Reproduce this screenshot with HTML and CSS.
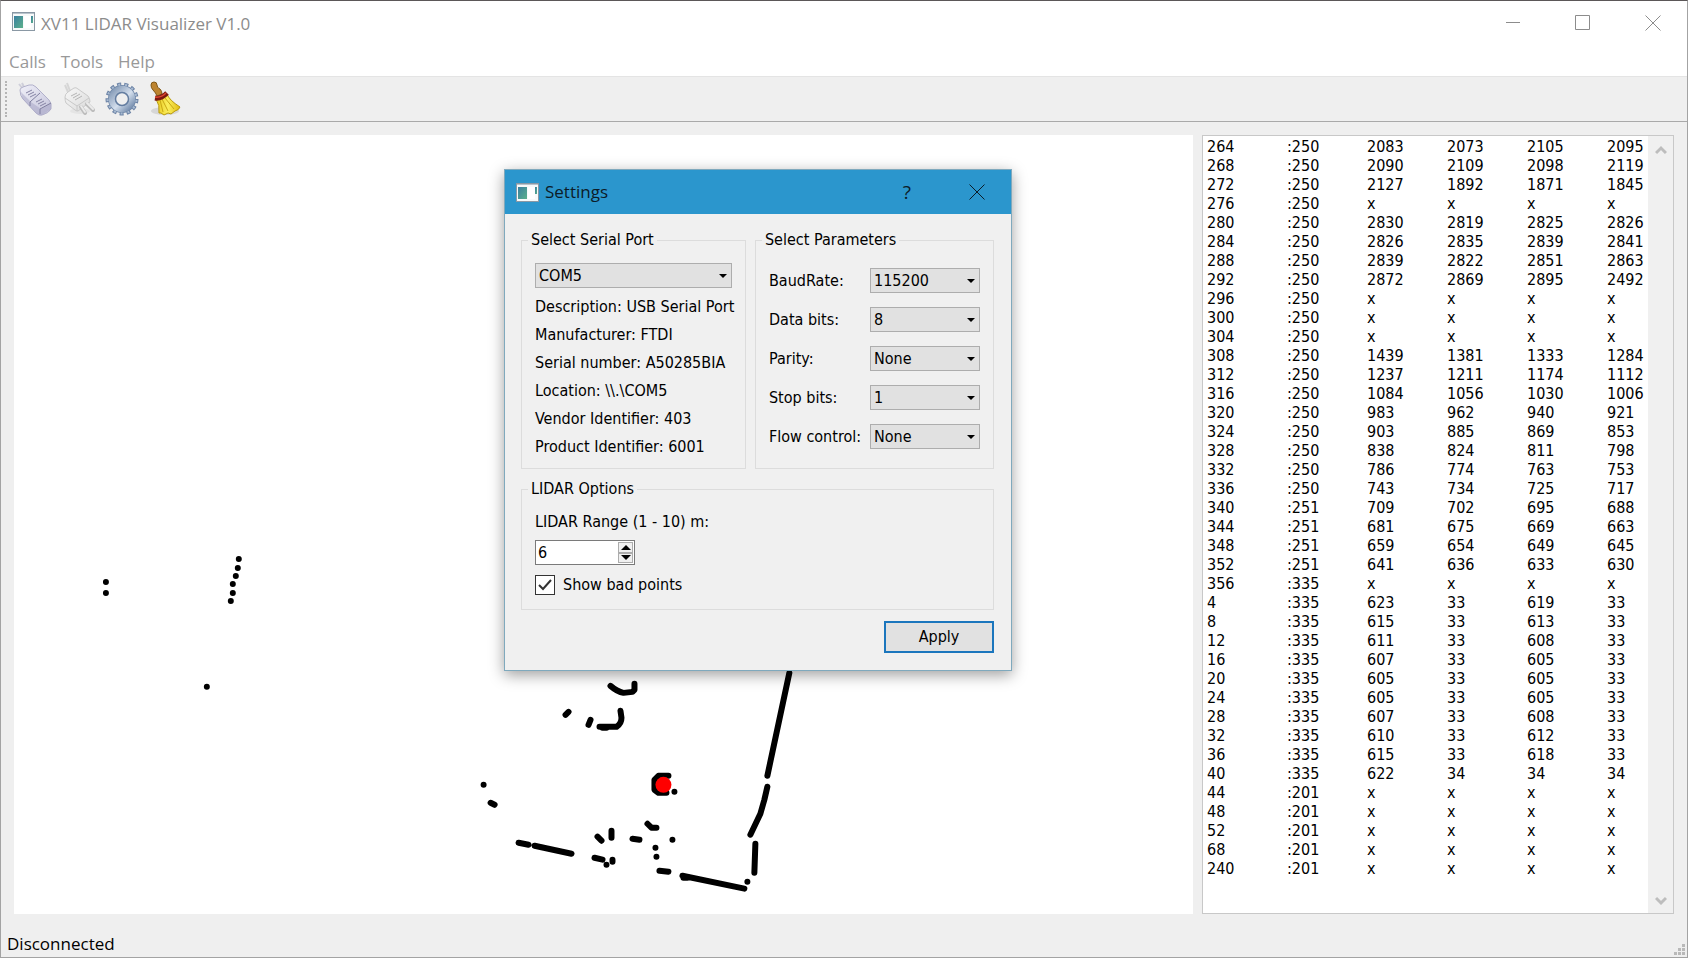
FILE: index.html
```html
<!DOCTYPE html>
<html lang="en">
<head>
<meta charset="utf-8">
<title>XV11 LIDAR Visualizer V1.0</title>
<link rel="stylesheet" href="styles.css">
</head>
<body>
<svg width="0" height="0" class="defs" aria-hidden="true">
  <defs>
    <linearGradient id="teal" x1="0" y1="0" x2="1" y2="1"><stop offset="0" stop-color="#3a7fa0"/><stop offset="1" stop-color="#5bb08a"/></linearGradient>
    <linearGradient id="steel" x1="0" y1="0" x2="1" y2="1"><stop offset="0" stop-color="#8298b5"/><stop offset=".55" stop-color="#d3deec"/><stop offset="1" stop-color="#6f88aa"/></linearGradient>
    <linearGradient id="lilac" x1="0" y1="0" x2="1" y2="1"><stop offset="0" stop-color="#f0f0f8"/><stop offset="1" stop-color="#c3c2da"/></linearGradient>
    <linearGradient id="pale" x1="0" y1="0" x2="1" y2="1"><stop offset="0" stop-color="#f8f8f8"/><stop offset="1" stop-color="#dadada"/></linearGradient>
    <linearGradient id="straw" x1="0" y1="0" x2="1" y2="0"><stop offset="0" stop-color="#e8c71c"/><stop offset=".5" stop-color="#fbee5c"/><stop offset="1" stop-color="#e2bd12"/></linearGradient>
    <symbol id="app" viewBox="0 0 23 19">
      <rect x=".5" y=".5" width="22" height="18" fill="#f8fafa" stroke="#8a98a4"/>
      <path d="M1 1.500H22" stroke="#b9c4cc"/>
      <rect x="2" y="4" width="9" height="12" fill="url(#teal)"/>
      <rect x="12" y="4" width="7" height="12" fill="#fff"/>
      <rect x="19" y="4" width="2" height="7" fill="url(#teal)"/>
    </symbol>
  </defs>
</svg>
<div class="window">
  <header class="titlebar">
    <svg class="appicon" width="23" height="19" aria-hidden="true"><use href="#app"/></svg>
    <h1 class="title">XV11 LIDAR Visualizer V1.0</h1>
    <div class="winbuttons">
      <button class="winbtn" aria-label="Minimize"><svg width="16" height="16"><path d="M1 7.500H15"/></svg></button>
      <button class="winbtn" aria-label="Maximize"><svg width="16" height="16"><path d="M.5.5H14.500V14.500H.5Z"/></svg></button>
      <button class="winbtn" aria-label="Close"><svg width="16" height="16"><path d="M.5.5 15.500 15.500M15.500.5.5 15.500"/></svg></button>
    </div>
  </header>
  <nav class="menubar">
    <button>Calls</button><button>Tools</button><button>Help</button>
  </nav>
  <div class="toolbar">
    <span class="grip"></span>
    <button class="tool" aria-label="Connect">
      <svg width="36" height="36" viewBox="0 0 36 36">
        <path d="M4 2 6 6M1 3 5 8" stroke="#cfcfda" stroke-width="2"/>
        <path d="M2 9Q2 7 5 6L11 4Q15 3 18 6L31 19Q34 22 33 28Q31 32 24 34Q21 35 18 32L5 18Q2 15 2 9Z" fill="url(#lilac)" stroke="#b1b0ca"/>
        <path d="M4 17 18 32Q21 35 24 34L33 28 33 22 23 28 13 21 3 11Z" fill="#a9a8c6" opacity=".55"/>
        <path d="M12 25V21L22 12M22 33V28L33 22" fill="none" stroke="#7f7e9f"/>
        <path d="M8 12 14 9M10 14 16 11M12 16 18 13M18 21 24 18M20 23 26 20M22 25 28 22" stroke="#8583a4"/>
      </svg>
    </button>
    <button class="tool" aria-label="Disconnect">
      <svg width="36" height="36" viewBox="0 0 36 36">
        <ellipse cx="19" cy="30" rx="10" ry="3" fill="#e4e4e4"/>
        <path d="M6 2 9 10M4 4 7 11" stroke="#d6d6d6" stroke-width="2"/>
        <path d="M4 16Q4 13 7 11L13 7Q15 6 17 8L27 15Q29 17 29 21L17 30Q15 30 14 29L5 22Q4 20 4 16Z" fill="url(#pale)" stroke="#cacaca"/>
        <path d="M4 17 16 25 28 17M16 25V30" fill="none" stroke="#c8c8c8"/>
        <path d="M10 15 16 12M12 17 19 13M14 19 21 15" stroke="#b5b5b5"/>
        <path d="M20 26 24 32M26 23 32 29" stroke="#bdbdbd" stroke-width="4" stroke-linecap="round"/>
        <path d="M20 25 24 31M26 22 32 28" stroke="#ebebeb" stroke-width="2" stroke-linecap="round"/>
      </svg>
    </button>
    <button class="tool" aria-label="Settings">
      <svg width="36" height="36" viewBox="0 0 36 36">
        <circle cx="18" cy="18" r="14.500" fill="none" stroke="#6d84a6" stroke-width="4" stroke-dasharray="4 3.010"/>
        <circle cx="18" cy="18" r="10" fill="none" stroke="#6f87a8" stroke-width="8"/>
        <circle cx="18" cy="18" r="14.500" fill="none" stroke="#a9bbd2" stroke-width="2" stroke-dasharray="2 5.010" stroke-dashoffset="-1"/>
        <circle cx="18" cy="18" r="10" fill="none" stroke="url(#steel)" stroke-width="6.500"/>
        <circle cx="18" cy="18" r="6.500" fill="#efefef" stroke="#647da0" stroke-width="1.500"/>
      </svg>
    </button>
    <button class="tool" aria-label="Clear">
      <svg width="36" height="36" viewBox="0 0 36 36">
        <ellipse cx="18" cy="30" rx="14" ry="4" fill="#d6d6d6"/>
        <path d="M4 4Q4 1 7 1Q10 1 10 4Q10 7 13 8Q15 10 15 13L10 15Q9 12 6 9Q4 7 4 4Z" fill="#bd8430" stroke="#805715"/>
        <path d="M9 18 20 13Q22 19 33 26Q32 29 28 30L24 33 21 32 17 34 14 32 12 32Q13 24 9 18Z" fill="url(#straw)" stroke="#b99a0b"/>
        <path d="M13 19 16 31M15 18 21 30M18 17 27 28" stroke="#c9a814" fill="none"/>
        <path d="M8 17Q14 18 20 12" fill="none" stroke="#7b1810" stroke-width="5"/>
        <path d="M8 16Q14 17 19 12" fill="none" stroke="#dc4630" stroke-width="1.500"/>
      </svg>
    </button>
  </div>
  <main class="workspace">
    <section class="plot" aria-label="Scan plot">
      <svg class="scan" viewBox="14 135 1180 779">
        <g class="pt">
          <path d="M106 582h0M106 593h0M239 559h0M238 568h0M236 576h0M233 584h0M233 593h0M231 601h0M207 687h0M484 785h0M491 803l4 2M519 843l10 2M535 846l37 8"/>
          <path d="M611 686Q618 692 624 693L633 692 635 690V684M566 715l3-3M589 725l2-5M600 727H617Q622 724 622 718L621 711M603 728h4M675 792h0"/>
          <path d="M790 673 768 776M768 787 765 800 761 814 751 835M756 844 755 873M748 882h0"/>
          <path d="M648 824l4 4h5M633 839l7 1M673 840h0M656 848h0M657 857h0M612 831v7M598 837l4 4M595 858l8 2M607 865h0M613 860v2M660 871l9 1M683 876 745 889M684 878h4"/>
          <path d="M669 776H659L655 780V790L659 793H667"/>
        </g>
        <circle cx="664" cy="785" r="8" fill="#f00"/>
      </svg>
    </section>
    <section class="log">
      <table class="readings">
        <colgroup><col class="c"><col class="c"><col class="c"><col class="c"><col class="c"><col></colgroup>
        <tbody>
        <tr><td>264<td>:250<td>2083<td>2073<td>2105<td>2095
        <tr><td>268<td>:250<td>2090<td>2109<td>2098<td>2119
        <tr><td>272<td>:250<td>2127<td>1892<td>1871<td>1845
        <tr><td>276<td>:250<td>x<td>x<td>x<td>x
        <tr><td>280<td>:250<td>2830<td>2819<td>2825<td>2826
        <tr><td>284<td>:250<td>2826<td>2835<td>2839<td>2841
        <tr><td>288<td>:250<td>2839<td>2822<td>2851<td>2863
        <tr><td>292<td>:250<td>2872<td>2869<td>2895<td>2492
        <tr><td>296<td>:250<td>x<td>x<td>x<td>x
        <tr><td>300<td>:250<td>x<td>x<td>x<td>x
        <tr><td>304<td>:250<td>x<td>x<td>x<td>x
        <tr><td>308<td>:250<td>1439<td>1381<td>1333<td>1284
        <tr><td>312<td>:250<td>1237<td>1211<td>1174<td>1112
        <tr><td>316<td>:250<td>1084<td>1056<td>1030<td>1006
        <tr><td>320<td>:250<td>983<td>962<td>940<td>921
        <tr><td>324<td>:250<td>903<td>885<td>869<td>853
        <tr><td>328<td>:250<td>838<td>824<td>811<td>798
        <tr><td>332<td>:250<td>786<td>774<td>763<td>753
        <tr><td>336<td>:250<td>743<td>734<td>725<td>717
        <tr><td>340<td>:251<td>709<td>702<td>695<td>688
        <tr><td>344<td>:251<td>681<td>675<td>669<td>663
        <tr><td>348<td>:251<td>659<td>654<td>649<td>645
        <tr><td>352<td>:251<td>641<td>636<td>633<td>630
        <tr><td>356<td>:335<td>x<td>x<td>x<td>x
        <tr><td>4<td>:335<td>623<td>33<td>619<td>33
        <tr><td>8<td>:335<td>615<td>33<td>613<td>33
        <tr><td>12<td>:335<td>611<td>33<td>608<td>33
        <tr><td>16<td>:335<td>607<td>33<td>605<td>33
        <tr><td>20<td>:335<td>605<td>33<td>605<td>33
        <tr><td>24<td>:335<td>605<td>33<td>605<td>33
        <tr><td>28<td>:335<td>607<td>33<td>608<td>33
        <tr><td>32<td>:335<td>610<td>33<td>612<td>33
        <tr><td>36<td>:335<td>615<td>33<td>618<td>33
        <tr><td>40<td>:335<td>622<td>34<td>34<td>34
        <tr><td>44<td>:201<td>x<td>x<td>x<td>x
        <tr><td>48<td>:201<td>x<td>x<td>x<td>x
        <tr><td>52<td>:201<td>x<td>x<td>x<td>x
        <tr><td>68<td>:201<td>x<td>x<td>x<td>x
        <tr><td>240<td>:201<td>x<td>x<td>x<td>x
        </tbody>
      </table>
      <div class="scrollbar">
        <button aria-label="Scroll up"><svg width="12" height="10"><path d="M1 8 6 3 11 8"/></svg></button>
        <button aria-label="Scroll down"><svg width="12" height="10"><path d="M1 2 6 7 11 2"/></svg></button>
      </div>
    </section>
  </main>
  <footer class="statusbar">
    <span>Disconnected</span>
    <svg class="sizegrip" width="11" height="11" aria-hidden="true"><path d="M8 0h3v3h-3zM4 4h3v3h-3zM8 4h3v3h-3zM0 8h3v3h-3zM4 8h3v3h-3zM8 8h3v3h-3z" fill="#b9b9b9"/></svg>
  </footer>

  <form class="dialog" role="dialog" aria-labelledby="dlg-title">
    <div class="dialog-bar">
      <svg width="23" height="19" aria-hidden="true"><use href="#app"/></svg>
      <h2 class="dialog-title" id="dlg-title">Settings</h2>
      <button type="button" class="dialog-help" aria-label="Help">?</button>
      <button type="button" class="dialog-close" aria-label="Close"><svg width="16" height="16"><path d="M.5.5 15.500 15.500M15.500.5.5 15.500"/></svg></button>
    </div>
    <div class="dialog-body">
      <div class="groups">
        <fieldset class="group port">
          <legend>Select Serial Port</legend>
          <div class="combo"><select aria-label="Serial port"><option>COM5</option></select></div>
          <div class="info">
            <p>Description: USB Serial Port</p>
            <p>Manufacturer: FTDI</p>
            <p>Serial number: A50285BIA</p>
            <p>Location: \\.\COM5</p>
            <p>Vendor Identifier: 403</p>
            <p>Product Identifier: 6001</p>
          </div>
        </fieldset>
        <fieldset class="group params">
          <legend>Select Parameters</legend>
          <div class="fields">
            <label for="baud">BaudRate:</label><div class="combo"><select id="baud"><option>115200</option></select></div>
            <label for="data">Data bits:</label><div class="combo"><select id="data"><option>8</option></select></div>
            <label for="parity">Parity:</label><div class="combo"><select id="parity"><option>None</option></select></div>
            <label for="stop">Stop bits:</label><div class="combo"><select id="stop"><option>1</option></select></div>
            <label for="flow">Flow control:</label><div class="combo"><select id="flow"><option>None</option></select></div>
          </div>
        </fieldset>
      </div>
      <fieldset class="group options">
        <legend>LIDAR Options</legend>
        <label for="range">LIDAR Range (1 - 10) m:</label>
        <div class="spin">
          <input id="range" type="number" min="1" max="10" value="6">
          <div class="steps">
            <button type="button" class="step" aria-label="Increase"><svg width="10" height="5"><path d="M0 5 5 0 10 5Z"/></svg></button>
            <button type="button" class="step" aria-label="Decrease"><svg width="10" height="5"><path d="M0 0 5 5 10 0Z"/></svg></button>
          </div>
        </div>
        <div class="check">
          <span class="box"><input id="bad" type="checkbox" checked><svg width="14" height="12" aria-hidden="true"><path d="M1 6 5 10 13 1"/></svg></span>
          <label for="bad">Show bad points</label>
        </div>
      </fieldset>
      <button type="button" class="apply">Apply</button>
    </div>
  </form>
</div>
</body>
</html>
```
FILE: styles.css
```css
* { box-sizing: border-box; }
body {
  margin: 0;
  font: 16px/20px "DejaVu Sans Condensed", "Noto Sans", sans-serif;
  color: #000;
}
button, input, select { font: inherit; color: inherit; margin: 0; padding: 0; }
button { background: none; border: 0; display: flex; align-items: center; justify-content: center; }
svg { display: block; }
.defs { position: absolute; }

.window {
  position: relative;
  min-height: 100vh;
  display: flex;
  flex-direction: column;
  background: #efefef;
  border: 1px solid #a3a3a3;
  border-top-color: #5b5758;
}

.titlebar {
  display: flex;
  align-items: flex-start;
  background: #fff;
  height: 44px;
  padding: 11px 14px 0 11px;
}
.title {
  margin: 0 0 0 6px;
  flex: 1;
  font: 400 17px/24px "Open Sans", sans-serif;
  color: #8c8c8c;
}
.winbuttons { display: flex; gap: 54px; padding: 3px 12px 0 0; }
.winbtn svg, .dialog-close svg { fill: none; stroke: #8c8c8c; }

.menubar {
  display: flex;
  gap: 15px;
  height: 32px;
  padding: 5px 8px;
  background: #fff;
  border-bottom: 1px solid #e4e4e4;
}
.menubar button { font: 17px/24px "Open Sans", sans-serif; color: #999; height: 24px; }

.toolbar {
  display: flex;
  align-items: center;
  gap: 7px;
  height: 45px;
  padding: 0 4px;
  border-bottom: 1px solid #a9a9a9;
}
.grip { align-self: stretch; margin: 4px 4px 4px 0; border-left: 2px dotted #b5b5b5; }
.tool { width: 36px; height: 40px; }

.workspace {
  flex: 1;
  display: flex;
  gap: 9px;
  padding: 13px 13px 0 13px;
}
.plot { flex: 1; min-width: 0; background: #fff; display: flex; }
.scan { width: 100%; }
.pt { fill: none; stroke: #000; stroke-width: 6; stroke-linecap: round; stroke-linejoin: round; }

.log { width: 472px; display: flex; background: #fff; border: 1px solid #c8c8c8; }
.readings { flex: 1; align-self: flex-start; table-layout: fixed; width: 0; border-collapse: collapse; margin: 1px 0 0 4px; }
.c { width: 80px; }
.readings td { padding: 0; height: 19px; line-height: 19px; }
.scrollbar {
  width: 25px;
  background: #f0f0f0;
  display: flex;
  flex-direction: column;
  justify-content: space-between;
  align-items: center;
  padding: 9px 0 7px;
}
.scrollbar path { fill: none; stroke: #bdbdbd; stroke-width: 3; }

.statusbar {
  display: flex;
  justify-content: space-between;
  align-items: flex-end;
  height: 43px;
  padding: 0 2px 1px 6px;
  font: 17px/24px "Open Sans", sans-serif;
}
.sizegrip { margin-bottom: 1px; }

.dialog {
  position: absolute;
  left: 503px;
  top: 168px;
  width: 508px;
  background: #f0f0f0;
  border: 1px solid #7fa9bd;
  box-shadow: 0 4px 14px rgba(0, 0, 0, .38);
}
.dialog-bar {
  display: flex;
  align-items: center;
  height: 44px;
  padding: 0 26px 0 11px;
  background: #2b96cd;
  color: #0c1c28;
}
.dialog-title { flex: 1; margin: 0 0 0 6px; font: 400 17px/24px "Open Sans", sans-serif; }
.dialog-help { font: 19px/24px "Open Sans", sans-serif; margin-right: 58px; }
.dialog-close svg { stroke: #0c1c28; }

.dialog-body { display: flex; flex-direction: column; padding: 16px 17px 17px 16px; }
.groups { display: flex; gap: 9px; }
.group { min-width: 0; margin: 0; border: 1px solid #dcdcdc; padding: 13px 13px 7px; }
.group legend { margin-left: -7px; padding: 0 3px; }
.port { flex: 224; }
.params { flex: 240; padding-top: 18px; }
.info { margin-top: 5px; }
.info p { margin: 0; line-height: 28px; white-space: nowrap; }
.fields { display: grid; grid-template-columns: 1fr 110px; row-gap: 14px; align-items: center; }
.fields label { white-space: nowrap; }

.combo { display: grid; align-items: center; }
.combo select {
  grid-area: 1 / 1;
  appearance: none;
  width: 100%;
  height: 25px;
  padding: 0 20px 0 3px;
  background: #e1e1e1;
  border: 1px solid #adadad;
  border-radius: 0;
}
.combo::after {
  content: "";
  grid-area: 1 / 1;
  justify-self: end;
  margin-right: 5px;
  border: 4px solid transparent;
  border-top-color: #000;
  border-bottom: 0;
  pointer-events: none;
}

.options { display: flex; flex-direction: column; align-items: flex-start; margin-top: 10px; padding-bottom: 14px; }
.spin { display: flex; width: 100px; height: 25px; margin-top: 8px; background: #fff; border: 1px solid #7a7a7a; }
.spin input { flex: 1; min-width: 0; border: 0; outline: 0; background: none; padding: 0 2px; appearance: textfield; }
.spin input::-webkit-inner-spin-button { display: none; }
.steps { display: flex; flex-direction: column; width: 16px; padding: 1px 1px 1px 0; }
.step { flex: 1; background: #f0f0f0; border: 1px solid #acacac; }
.check { display: flex; align-items: center; gap: 8px; margin-top: 10px; }
.box { display: grid; place-items: center; }
.box input { grid-area: 1 / 1; appearance: none; width: 20px; height: 20px; background: #fff; border: 1px solid #333; }
.box svg { grid-area: 1 / 1; fill: none; stroke: #333; stroke-width: 2; pointer-events: none; }
.box input:not(:checked) + svg { visibility: hidden; }

.apply { align-self: flex-end; width: 110px; height: 32px; margin-top: 11px; background: #e1e1e1; border: 2px solid #1b76bd; }
```
